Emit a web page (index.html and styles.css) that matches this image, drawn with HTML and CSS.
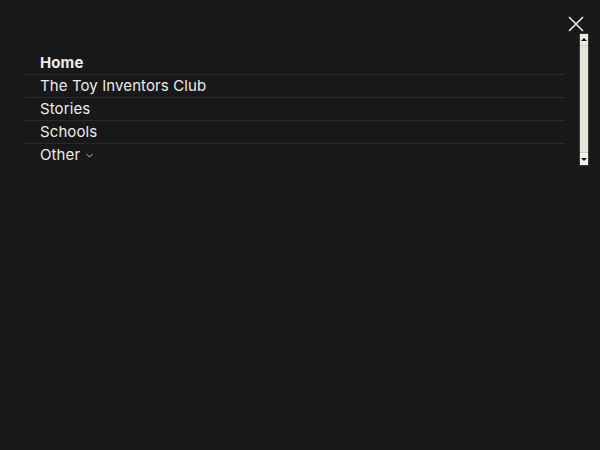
FILE: index.html
```html
<!DOCTYPE html>
<html lang="en">
<head>
<meta charset="utf-8">
<title>Menu</title>
<link rel="stylesheet" href="styles.css">
</head>
<body>
<button class="close" aria-label="Close">
  <svg width="16" height="16" viewBox="0 0 16 16"><path d="M1 1L15 15M15 1L1 15" stroke="#e8e8e8" stroke-width="1.6" fill="none"/></svg>
</button>
<div class="panel">
  <ul class="menu">
    <li class="item active">Home</li>
    <li class="item">The Toy Inventors Club</li>
    <li class="item">Stories</li>
    <li class="item">Schools</li>
    <li class="item last">Other <svg class="chev" width="7" height="5" viewBox="0 0 7 5"><path d="M0.5 1L3.5 4L6.5 1" stroke="#bdbdbd" stroke-width="1" fill="none"/></svg></li>
  </ul>
  <div class="scrollbar">
    <div class="btn up"><span class="tri-up"></span></div>
    <div class="thumb"></div>
    <div class="btn down"><span class="tri-down"></span></div>
  </div>
</div>
</body>
</html>
```
FILE: styles.css
```css
html, body {
  margin: 0;
  padding: 0;
  background: #181818;
  height: 100%;
}
body {
  font-family: "Inter", "Liberation Sans", sans-serif;
  color: #ececec;
}
.close {
  position: absolute;
  top: 16px;
  left: 568px;
  width: 16px;
  height: 16px;
  padding: 0;
  border: 0;
  background: none;
  display: block;
}
.close svg { display: block; }
.panel {
  display: flex;
  align-items: flex-start;
  gap: 14px;
  padding: 33px 11px 0 25px;
}
.menu {
  list-style: none;
  margin: 19px 0 0 0;
  padding: 0;
  flex: 1;
}
.item {
  height: 22px;
  line-height: 22px;
  padding-left: 15px;
  font-size: 15px;
  border-bottom: 1px solid #2a2a2a;
  letter-spacing: 0.1px;
}
.item.last { border-bottom: 0; }
.item.active { font-weight: 700; }
.chev { vertical-align: middle; margin-left: 2px; }
.scrollbar {
  width: 8px;
  height: 131px;
  display: flex;
  flex-direction: column;
  background: #e6e4dc;
  border: 1px solid #3a3a3a;
}
.btn {
  height: 11px;
  display: flex;
  align-items: center;
  justify-content: center;
  background: #e9e7e1;
}
.btn.down { background: #f2f1ec; height: 12px; }
.thumb {
  flex: 1;
  background: #e4e2da;
  border-top: 1px solid #cfcdc6;
  border-bottom: 1px solid #cfcdc6;
}
.tri-up, .tri-down {
  width: 0; height: 0;
  border-left: 3px solid transparent;
  border-right: 3px solid transparent;
}
.tri-up { border-bottom: 3px solid #111; }
.tri-down { border-top: 3px solid #111; }
```
